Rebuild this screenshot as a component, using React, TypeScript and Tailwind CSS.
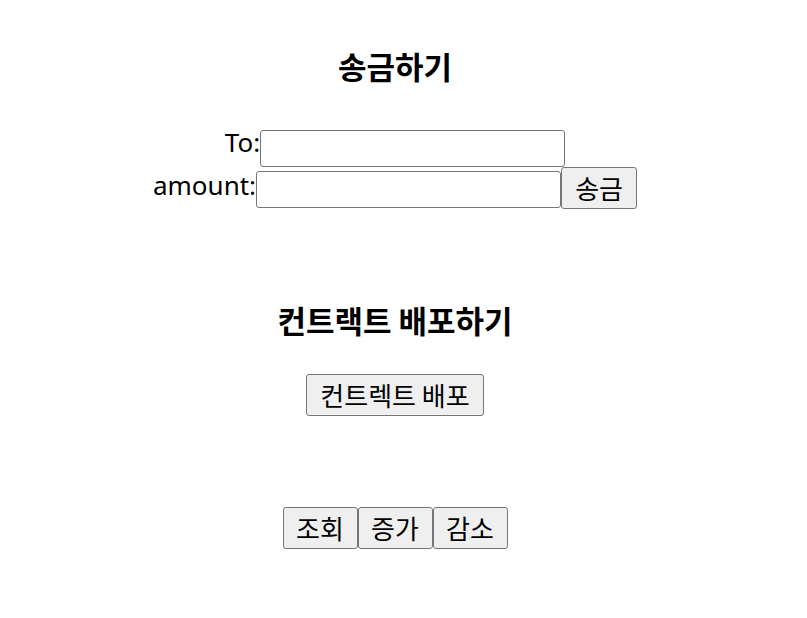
import React from "react";

const kr = "font-['Noto_Sans_CJK_KR',sans-serif]";
const btn =
  "flex items-center justify-center h-[42px] bg-[#efefef] border border-[#767676] rounded-[3px] text-[26px] leading-[26px] text-black " +
  kr;
const input = "h-[37px] w-[305px] border border-[#767676] rounded-[3px] bg-white";
const label = "text-[26px] leading-[26px] text-black font-['Noto_Sans','Noto_Sans_CJK_KR',sans-serif]";
const heading = `h-[40px] text-[31px] leading-[40px] font-bold text-black ${kr}`;

function App() {
  return (
    <div className="w-[790px] min-h-[618px] bg-white flex flex-col items-center">
      <h2 className={`mt-[46px] ${heading}`}>송금하기</h2>

      <div className="mt-[43px] flex items-start h-[38px]">
        <span className={label}>To:</span>
        <input className={`${input} mt-px`} />
      </div>
      <div className="flex items-start h-[42px]">
        <span className={`${label} mt-[5px]`}>amount:</span>
        <input className={`${input} mt-[4px]`} />
        <button className={`${btn} w-[76px]`}>송금</button>
      </div>

      <h2 className={`mt-[91px] ${heading}`}>컨트랙트 배포하기</h2>
      <button className={`${btn} mt-[34px] w-[178px]`}>컨트렉트 배포</button>

      <div className="mt-[91px] flex">
        <button className={`${btn} w-[75px]`}>조회</button>
        <button className={`${btn} w-[75px]`}>증가</button>
        <button className={`${btn} w-[75px]`}>감소</button>
      </div>
    </div>
  );
}

export default App;
